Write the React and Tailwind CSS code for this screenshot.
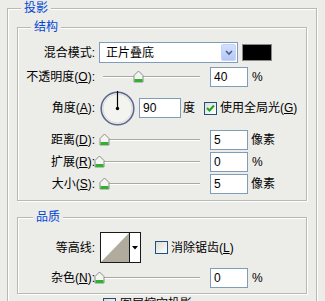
import React from "react";

const font = {
  fontFamily: '"Liberation Sans", "Noto Sans CJK SC", sans-serif',
};

const Thumb = () => (
  <svg width="11" height="13" viewBox="0 0 11 13">
    <path d="M1 5.5 L5.5 1 L10 5.5 V12 H1 Z" fill="#f4f4f2" stroke="#8c8c88" />
    <rect x="1.5" y="9" width="8" height="3" fill="#2fb22f" />
  </svg>
);

const Slider = ({ pos }) => (
  <div className="relative w-[106px] h-[20px] ml-[4px] shrink-0">
    <div className="absolute left-[4px] right-[5px] top-[9px] h-[1px] bg-[#a9a8a2] border-b border-white box-content" />
    <div className="absolute top-[3px]" style={{ left: pos - 5 }}>
      <Thumb />
    </div>
  </div>
);

const Field = ({ value, w = "w-[38px]", ml = "ml-[5px]" }) => (
  <div
    className={`${w} ${ml} h-[20px] shrink-0 bg-white border border-[#7f9db9] flex items-center pl-[3px] text-[12px] text-black`}
  >
    {value}
  </div>
);

const Label = ({ children, k, end = ":" }) => (
  <div className="w-[77px] shrink-0 text-right text-[12px] text-black whitespace-nowrap">
    {children}
    {k && (
      <>
        (<span className="underline">{k}</span>)
      </>
    )}
    {end}
  </div>
);

const Check = ({ checked }) => (
  <div className="w-[13px] h-[13px] shrink-0 border border-[#1c5180] bg-gradient-to-br from-[#dcdcd6] to-white flex items-center justify-center">
    {checked && (
      <svg width="9" height="9" viewBox="0 0 9 9">
        <path d="M1 4 L3.5 6.5 L8 1.5" fill="none" stroke="#21a121" strokeWidth="2" />
      </svg>
    )}
  </div>
);

const Group = ({ title, children, ml = "ml-[13px]", className = "" }) => (
  <fieldset
    className={`border border-[#b9b8b2] shadow-[inset_1px_1px_0_#fff,1px_1px_0_#fff] p-0 m-0 ${className}`}
  >
    <legend className={`${ml} px-[3px] h-[16px] leading-[16px] text-[12px] text-[#0046d5] bg-[#ecece9]`}>
      {title}
    </legend>
    {children}
  </fieldset>
);

const Row = ({ children, className = "" }) => (
  <div className={`flex items-center ${className}`}>{children}</div>
);

export default function App() {
  return (
    <div
      className="w-[325px] h-[301px] overflow-hidden bg-[#ecece9] pl-[7px] pr-[8px]"
      style={font}
    >
      <Group title="投影" className="h-[320px]">
        <div className="px-[9px]">
          <Group title="结构" className="mt-[3px]">
            <div className="pb-[6px]">
              <Row className="mt-[7px] h-[21px]">
                <Label>混合模式</Label>
                <div className="ml-[4px] w-[139px] h-[21px] bg-white border border-[#7f9db9] flex items-center shrink-0">
                  <span className="pl-[6px] text-[12px] flex-1">正片叠底</span>
                  <div className="w-[15px] h-[17px] mr-[1px] rounded-[2px] bg-gradient-to-b from-[#d4e0fd] to-[#b4c8f6] border border-[#c3d3fd] flex items-center justify-center">
                    <svg width="8" height="6" viewBox="0 0 8 6">
                      <path d="M1 1 L4 4 L7 1" fill="none" stroke="#4d6185" strokeWidth="1.6" />
                    </svg>
                  </div>
                </div>
                <div className="ml-[4px] w-[30px] h-[17px] bg-black border border-[#8a8a86] shrink-0" />
              </Row>
              <Row className="mt-[4px] h-[20px]">
                <Label k="O">不透明度</Label>
                <Slider pos={39} />
                <Field value="40" />
                <span className="ml-[4px] text-[12px]">%</span>
              </Row>
              <Row className="mt-[4px] h-[34px]">
                <Label k="A">角度</Label>
                <svg className="ml-[5px] shrink-0" width="35" height="35" viewBox="0 0 35 35">
                  <circle cx="17.5" cy="17.5" r="16.3" fill="#f3f3ef" stroke="#5a6790" strokeWidth="1.6" />
                  <circle cx="17.5" cy="17.5" r="14.5" fill="none" stroke="#dcdcd6" strokeWidth="1" />
                  <line x1="17.5" y1="17.5" x2="17.5" y2="0" stroke="#000" strokeWidth="1.2" />
                  <circle cx="17.5" cy="17.5" r="1.7" fill="#000" />
                </svg>
                <Field value="90" w="w-[42px]" ml="ml-[4px]" />
                <span className="ml-[2px] text-[12px]">度</span>
                <div className="ml-[9px]">
                  <Check checked />
                </div>
                <span className="ml-[3px] text-[12px] whitespace-nowrap">
                  使用全局光(<span className="underline">G</span>)
                </span>
              </Row>
              <Row className="mt-[5px] h-[20px]">
                <Label k="D">距离</Label>
                <Slider pos={5} />
                <Field value="5" />
                <span className="ml-[3px] text-[12px]">像素</span>
              </Row>
              <Row className="mt-[2px] h-[20px]">
                <Label k="R">扩展</Label>
                <Slider pos={0} />
                <Field value="0" />
                <span className="ml-[4px] text-[12px]">%</span>
              </Row>
              <Row className="mt-[2px] h-[20px]">
                <Label k="S">大小</Label>
                <Slider pos={5} />
                <Field value="5" />
                <span className="ml-[3px] text-[12px]">像素</span>
              </Row>
            </div>
          </Group>

          <Group title="品质" ml="ml-[15px]" className="mt-[8px]">
            <div className="pb-[5px]">
              <Row className="mt-[7px] h-[31px]">
                <Label>等高线</Label>
                <div className="ml-[5px] w-[41px] h-[31px] border border-[#1a1a1a] bg-white flex shrink-0">
                  <svg width="28" height="29" viewBox="0 0 28 29">
                    <polygon points="0,29 28,0 28,29" fill="#b1ab9e" />
                  </svg>
                  <div className="flex-1 border-l border-[#1a1a1a] flex items-center justify-center">
                    <svg width="6" height="4" viewBox="0 0 6 4">
                      <polygon points="0,0 6,0 3,3.5" fill="#000" />
                    </svg>
                  </div>
                </div>
                <div className="ml-[14px]">
                  <Check />
                </div>
                <span className="ml-[3px] text-[12px] whitespace-nowrap">
                  消除锯齿(<span className="underline">L</span>)
                </span>
              </Row>
              <Row className="mt-[5px] h-[20px]">
                <Label k="N">杂色</Label>
                <Slider pos={0} />
                <Field value="0" />
                <span className="ml-[4px] text-[12px]">%</span>
              </Row>
            </div>
          </Group>

          <Row className="mt-[2px] h-[16px] items-start pl-[86px]">
            <div className="mt-[2px]">
              <Check />
            </div>
            <span className="ml-[4px] text-[12px] leading-[16px] whitespace-nowrap">图层挖空投影</span>
          </Row>
        </div>
      </Group>
    </div>
  );
}
